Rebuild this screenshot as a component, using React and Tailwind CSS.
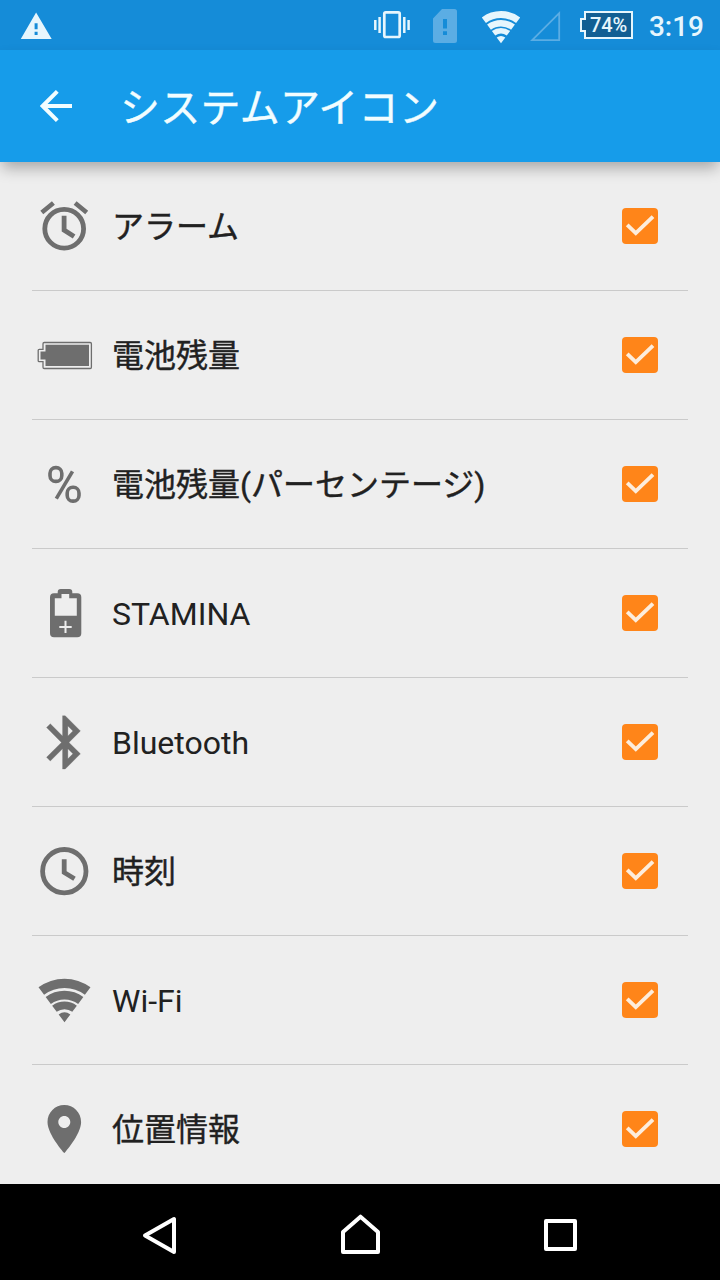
import React, { useState } from "react";

const HALF_ANGLE = (36.6 * Math.PI) / 180;

// One slice of the Wi-Fi fan, opening upwards from (cx, cy)
function fanSlice(cx, cy, outer, inner) {
  const s = Math.sin(HALF_ANGLE);
  const c = Math.cos(HALF_ANGLE);
  return [
    `M${cx - outer * s} ${cy - outer * c}`,
    `A${outer} ${outer} 0 0 1 ${cx + outer * s} ${cy - outer * c}`,
    `L${cx + inner * s} ${cy - inner * c}`,
    `A${inner} ${inner} 0 0 0 ${cx - inner * s} ${cy - inner * c}Z`,
  ].join("");
}

function WifiFan({ cx, cy, size }) {
  const bands = [
    [1, 0.785],
    [0.725, 0.525],
    [0.475, 0.3],
    [0.225, 0.001],
  ];
  return bands.map(([outer, inner]) => (
    <path key={outer} d={fanSlice(cx, cy, outer * size, inner * size)} fill="currentColor" />
  ));
}

const icons = {
  alarm: (
    <g fill="none" stroke="currentColor" strokeWidth="4.8">
      <circle cx="32.2" cy="34.7" r="19.4" />
      <path d="M32.1 21.8v14.3l10 6.4" />
      <path d="M9.8 18.6l11.6-9.6M43.1 9l11.6 9.6" strokeWidth="4.6" />
    </g>
  ),
  battery: (
    <g>
      <path
        d="M12.2 19.5h46a1.2 1.2 0 0 1 1.2 1.2v23.6a1.2 1.2 0 0 1-1.2 1.2h-46a1.2 1.2 0 0 1-1.2-1.2v-5.6H7.2a1 1 0 0 1-1-1V27.3a1 1 0 0 1 1-1H11v-5.6a1.2 1.2 0 0 1 1.2-1.2z"
        fill="none"
        stroke="currentColor"
        strokeWidth="1.3"
      />
      <path d="M13.5 21.8h43.5v21.2h-43.5v-6.5h-5v-8h5z" fill="currentColor" />
    </g>
  ),
  percent: (
    <g fill="none" stroke="currentColor" strokeWidth="3.6">
      <rect x="18" y="15.6" width="11.8" height="13.8" rx="5.7" />
      <rect x="35.2" y="35.3" width="11.8" height="13.8" rx="5.7" />
      <path d="M40.5 19.3L24.3 46.6" />
    </g>
  ),
  stamina: (
    <path
      d="M28.7 8h8.6a3 3 0 0 1 3 3v1.3h5a4 4 0 0 1 4 4v36a4 4 0 0 1-4 4H22a4 4 0 0 1-4-4v-36a4 4 0 0 1 4-4h3.7V11a3 3 0 0 1 3-3zM29.5 13v4.3h-6.7v17.4h22V17.3h-7.6V13zM32.5 39.7v5.2h-5.2v2h5.2v5.2h2v-5.2h5.2v-2h-5.2v-5.2z"
      fill="currentColor"
      fillRule="evenodd"
    />
  ),
  bluetooth: (
    <path
      d="M17.71 7.71L12 2h-1v7.59L6.41 5 5 6.41 10.59 12 5 17.59 6.41 19 11 14.41V22h1l5.71-5.71-4.3-4.29 4.3-4.29zM13 5.83l1.88 1.88L13 9.59V5.83zm1.88 10.46L13 18.17v-3.76l1.88 1.88z"
      transform="translate(1.2 .4) scale(2.667)"
      fill="currentColor"
      stroke="currentColor"
      strokeWidth="0.1"
    />
  ),
  clock: (
    <g fill="none" stroke="currentColor" strokeWidth="4.8">
      <circle cx="32.3" cy="32.2" r="21.7" />
      <path d="M32.2 20.2v13.3l10.3 6.3" />
    </g>
  ),
  wifi: <WifiFan cx={32.5} cy={54.3} size={43.6} />,
  location: (
    <path
      d="M12 2C8.13 2 5 5.13 5 9c0 5.25 7 13 7 13s7-7.75 7-13c0-3.87-3.13-7-7-7zm0 9.5c-1.38 0-2.5-1.12-2.5-2.5s1.12-2.5 2.5-2.5 2.5 1.12 2.5 2.5-1.12 2.5-2.5 2.5z"
      transform="translate(3.5 3.3) scale(2.4)"
      fill="currentColor"
    />
  ),
};

const settings = [
  { id: "alarm", label: "アラーム", ja: true },
  { id: "battery", label: "電池残量", ja: true },
  { id: "percent", label: "電池残量(パーセンテージ)", ja: true },
  { id: "stamina", label: "STAMINA" },
  { id: "bluetooth", label: "Bluetooth" },
  { id: "clock", label: "時刻", ja: true },
  { id: "wifi", label: "Wi-Fi" },
  { id: "location", label: "位置情報", ja: true },
];

function StatusBar() {
  return (
    <div className="flex h-[50px] shrink-0 items-center bg-[#158cd8] pl-5 pr-4 text-[#e6f6fd]">
      <svg className="h-[50px] w-8" viewBox="0 0 32 50">
        <path
          d="M16.1 12.5L31.7 39H.8zM14.6 23.3v6h3v-6zM14.6 31.7V35h3v-3.3z"
          fill="currentColor"
          fillRule="evenodd"
        />
      </svg>

      <div className="ml-auto flex items-center">
        {/* Vibrate */}
        <svg className="h-[50px] w-9" viewBox="0 0 36 50">
          <rect x="10.3" y="12.3" width="15.4" height="24.7" rx="1.5" fill="none" stroke="currentColor" strokeWidth="2.7" />
          <path d="M1.3 20v10M5.6 17v16M30.3 17v16M34.6 20v10" stroke="currentColor" strokeWidth="2.5" />
        </svg>
        {/* No SIM */}
        <svg className="ml-[23px] h-[50px] w-6 text-[#5bade4]" viewBox="0 0 24 50">
          <path
            d="M9 9h12.500A2.500 2.500 0 0 1 24 11.500v29a2.500 2.500 0 0 1-2.500 2.500h-19A2.500 2.500 0 0 1 0 40.500V18.500zM10 19v9.500h4V19zM10 31.300V35h4v-3.700z"
            fill="currentColor"
            fillRule="evenodd"
          />
        </svg>
        <svg className="ml-6 h-[50px] w-10" viewBox="0 0 40 50">
          <WifiFan cx={20} cy={43.3} size={32.2} />
        </svg>
        <svg className="ml-[9px] h-[50px] w-8 text-[#5bade4]" viewBox="0 0 32 50">
          <path d="M2.2 40.2h27v-27z" fill="none" stroke="currentColor" strokeWidth="1.8" />
        </svg>
        <div className="relative ml-[17px] h-[50px] w-14">
          <svg className="h-[50px] w-14" viewBox="0 0 56 50">
            <path d="M6 12h47v26H6v-7H2V19h4z" fill="#125f93" stroke="currentColor" strokeWidth="2" />
          </svg>
          <span className="absolute left-[11px] top-[13px] text-[20px] font-medium leading-6">74%</span>
        </div>
        <span className="ml-[14px] mt-[3px] text-[28px] font-medium leading-8">3:19</span>
      </div>
    </div>
  );
}

function Checkbox({ checked, onChange }) {
  return (
    <button
      role="checkbox"
      aria-checked={checked}
      onClick={onChange}
      className={`h-9 w-9 rounded-[4px] ${checked ? "bg-[#ff8519]" : "border-4 border-[#6e6e6e]"}`}>
      {checked && (
        <svg className="h-9 w-9" viewBox="0 0 36 36">
          <path d="M5.2 16.8l8.6 8.4L31 8.7" fill="none" stroke="#fdeddc" strokeWidth="3.8" />
        </svg>
      )}
    </button>
  );
}

function App() {
  const [enabled, setEnabled] = useState(() => settings.map((item) => item.id));

  const toggle = (id) => {
    setEnabled((prev) => (prev.includes(id) ? prev.filter((x) => x !== id) : [...prev, id]));
  };

  return (
    <div className="flex h-[1280px] w-[720px] flex-col overflow-hidden bg-[#eeeeee] font-['Roboto','Noto_Sans_CJK_JP',sans-serif]">
      <StatusBar />

      <header className="z-10 flex h-28 shrink-0 items-center bg-[#169cea] pl-10 text-[#f2fdff] shadow-[0_8px_14px_-2px_rgba(0,0,0,0.3)]">
        <svg className="h-8 w-8" viewBox="0 0 32 32">
          <path d="M32 16H3M17.3 1.4L2.7 16l14.6 14.6" fill="none" stroke="currentColor" strokeWidth="4" />
        </svg>
        <h1 className="ml-12 pt-[5px] text-[40px] leading-none tracking-[0.3px] [-webkit-text-stroke:0.4px]">
          システムアイコン
        </h1>
      </header>

      <ul className="min-h-0 flex-1 overflow-hidden px-8">
        {settings.map((item) => (
          <li key={item.id} className="flex h-[129px] items-center border-b border-[#cacaca] pr-[30px]">
            <svg className="h-16 w-16 text-[#6e6e6e]" viewBox="0 0 64 64">
              {icons[item.id]}
            </svg>
            <span
              className={`ml-4 flex-1 pt-0.5 text-[32px] leading-10 text-[#212121] ${
                item.ja ? "[-webkit-text-stroke:0.4px]" : ""
              }`}>
              {item.label}
            </span>
            <Checkbox checked={enabled.includes(item.id)} onChange={() => toggle(item.id)} />
          </li>
        ))}
      </ul>

      <nav className="flex h-24 shrink-0 items-center justify-center gap-[152px] bg-black text-white">
        <svg className="h-12 w-12" viewBox="0 0 48 48" fill="none" stroke="currentColor" strokeWidth="4" strokeLinejoin="round">
          <path d="M38 11v33L9 27.5z" />
        </svg>
        <svg className="h-12 w-12" viewBox="0 0 48 48" fill="none" stroke="currentColor" strokeWidth="4" strokeLinejoin="round">
          <path d="M7 44V24L24.5 8.7 42 24v20z" />
        </svg>
        <svg className="h-12 w-12" viewBox="0 0 48 48" fill="none" stroke="currentColor" strokeWidth="4" strokeLinejoin="round">
          <path d="M10 13h29v28H10z" />
        </svg>
      </nav>
    </div>
  );
}

export default App;
